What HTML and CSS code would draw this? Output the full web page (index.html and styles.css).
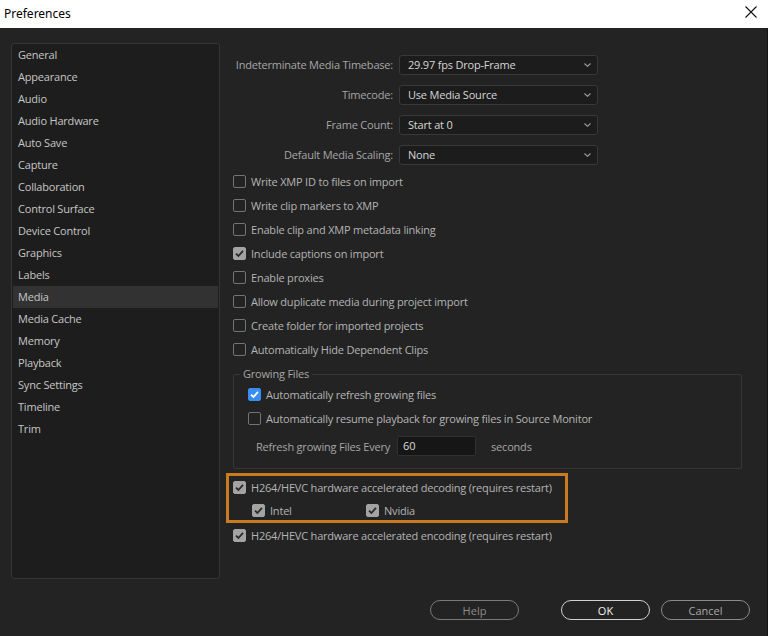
FILE: index.html
```html
<!DOCTYPE html>
<html>
<head>
  <meta charset="UTF-8" />
  <title>Preferences</title>
  <link rel="stylesheet" href="styles.css">
</head>
<body>

<!-- Window title bar -->
<div class="titlebar">
  <span class="title">Preferences</span>
  <svg class="close" width="12" height="12" viewBox="0 0 12 12">
    <path d="M0.5 0.5 L11.5 11.5 M11.5 0.5 L0.5 11.5" stroke="#111" stroke-width="1.1" fill="none"/>
  </svg>
</div>

<div class="dialog">
  <div class="main">

    <!-- Category list -->
    <ul class="sidebar">
      <li>General</li>
      <li>Appearance</li>
      <li>Audio</li>
      <li>Audio Hardware</li>
      <li>Auto Save</li>
      <li>Capture</li>
      <li>Collaboration</li>
      <li>Control Surface</li>
      <li>Device Control</li>
      <li>Graphics</li>
      <li>Labels</li>
      <li class="active">Media</li>
      <li>Media Cache</li>
      <li>Memory</li>
      <li>Playback</li>
      <li>Sync Settings</li>
      <li>Timeline</li>
      <li>Trim</li>
    </ul>

    <!-- Media settings -->
    <div class="pane">
      <div class="fields">
        <label>Indeterminate Media Timebase:</label>
        <div class="select">29.97 fps Drop-Frame <svg class="chev" width="7" height="4" viewBox="0 0 7 4"><path d="M0.5 0.5 L3.5 3.3 L6.5 0.5" stroke="#a0a0a0" stroke-width="1.1" fill="none"/></svg></div>
        <label>Timecode:</label>
        <div class="select">Use Media Source <svg class="chev" width="7" height="4" viewBox="0 0 7 4"><path d="M0.5 0.5 L3.5 3.3 L6.5 0.5" stroke="#a0a0a0" stroke-width="1.1" fill="none"/></svg></div>
        <label>Frame Count:</label>
        <div class="select">Start at 0 <svg class="chev" width="7" height="4" viewBox="0 0 7 4"><path d="M0.5 0.5 L3.5 3.3 L6.5 0.5" stroke="#a0a0a0" stroke-width="1.1" fill="none"/></svg></div>
        <label>Default Media Scaling:</label>
        <div class="select">None <svg class="chev" width="7" height="4" viewBox="0 0 7 4"><path d="M0.5 0.5 L3.5 3.3 L6.5 0.5" stroke="#a0a0a0" stroke-width="1.1" fill="none"/></svg></div>
      </div>

      <div class="checks">
        <div class="check"><span class="box"></span>Write XMP ID to files on import</div>
        <div class="check"><span class="box"></span>Write clip markers to XMP</div>
        <div class="check"><span class="box"></span>Enable clip and XMP metadata linking</div>
        <div class="check"><span class="box on"><svg width="11" height="11" viewBox="0 0 11 11"><path d="M2 5.6 L4.4 8 L9 2.8" stroke="#2b2b2b" stroke-width="1.8" fill="none"/></svg></span>Include captions on import</div>
        <div class="check"><span class="box"></span>Enable proxies</div>
        <div class="check"><span class="box"></span>Allow duplicate media during project import</div>
        <div class="check"><span class="box"></span>Create folder for imported projects</div>
        <div class="check"><span class="box"></span>Automatically Hide Dependent Clips</div>
      </div>

      <fieldset class="group">
        <legend>Growing Files</legend>
        <div class="check"><span class="box blue"><svg width="11" height="11" viewBox="0 0 11 11"><path d="M2 5.6 L4.4 8 L9 2.8" stroke="#fff" stroke-width="1.8" fill="none"/></svg></span>Automatically refresh growing files</div>
        <div class="check"><span class="box"></span>Automatically resume playback for growing files in Source Monitor</div>
        <div class="refresh">
          <span>Refresh growing Files Every</span>
          <div class="num">60</div>
          <span class="unit">seconds</span>
        </div>
      </fieldset>

      <div class="highlight">
        <div class="check"><span class="box on"><svg width="11" height="11" viewBox="0 0 11 11"><path d="M2 5.6 L4.4 8 L9 2.8" stroke="#2b2b2b" stroke-width="1.8" fill="none"/></svg></span>H264/HEVC hardware accelerated decoding (requires restart)</div>
        <div class="sub">
          <div class="check intel"><span class="box on"><svg width="11" height="11" viewBox="0 0 11 11"><path d="M2 5.6 L4.4 8 L9 2.8" stroke="#2b2b2b" stroke-width="1.8" fill="none"/></svg></span>Intel</div>
          <div class="check"><span class="box on"><svg width="11" height="11" viewBox="0 0 11 11"><path d="M2 5.6 L4.4 8 L9 2.8" stroke="#2b2b2b" stroke-width="1.8" fill="none"/></svg></span>Nvidia</div>
        </div>
      </div>

      <div class="check encode"><span class="box on"><svg width="11" height="11" viewBox="0 0 11 11"><path d="M2 5.6 L4.4 8 L9 2.8" stroke="#2b2b2b" stroke-width="1.8" fill="none"/></svg></span>H264/HEVC hardware accelerated encoding (requires restart)</div>
    </div>
  </div>

  <!-- Dialog buttons -->
  <div class="buttons">
    <button class="btn help">Help</button>
    <button class="btn ok">OK</button>
    <button class="btn">Cancel</button>
  </div>
</div>

</body>
</html>
```

FILE: styles.css
```css
/* Page reset */
body {
  margin: 0;
  width: 768px;
  height: 636px;
  overflow: hidden;
  background-color: #232323;
  font-family: "Open Sans", "Noto Sans", sans-serif;
  font-size: 11px;
  letter-spacing: -0.2px;
}

/* White window title bar */
.titlebar {
  height: 28px;
  background-color: #ffffff;
  display: flex;
  align-items: center;
  justify-content: space-between;
  padding: 0 11px 0 4px;
  letter-spacing: 0;
}

.title {
  font-family: "Noto Sans", sans-serif;
  font-size: 12px;
  color: #000;
  margin-top: -2px;
}

.close {
  margin-top: -4px;
}

/* Dark dialog body */
.dialog {
  height: 608px;
  display: flex;
  flex-direction: column;
  border-right: 1px solid #141414;
  box-sizing: border-box;
}

.main {
  display: flex;
  padding: 15px 0 0 11px;
}

/* Category list on the left */
.sidebar {
  list-style: none;
  margin: 0;
  padding: 0;
  width: 209px;
  height: 536px;
  box-sizing: border-box;
  background-color: #1d1d1d;
  border: 1px solid #353535;
  border-radius: 3px;
}

.sidebar li {
  height: 22px;
  line-height: 22px;
  padding-left: 5px;
  margin: 0 1px;
  color: #c6c6c6;
}

.sidebar li.active {
  background-color: #323232;
}

/* Right hand settings pane */
.pane {
  padding: 12px 0 0 6px;
  flex: 1;
}

.fields {
  display: grid;
  grid-template-columns: 167px 199px;
  column-gap: 6px;
  row-gap: 10px;
}

.fields label {
  text-align: right;
  line-height: 19px;
  color: #a6a6a6;
}

.select {
  height: 20px;
  box-sizing: border-box;
  border: 1px solid #383838;
  border-radius: 3px;
  background-color: #1c1c1c;
  color: #d6d6d6;
  padding: 0 6px 1px 8px;
  display: flex;
  align-items: center;
  justify-content: space-between;
}

.chev {
  margin-top: 1px;
}

/* Checkbox rows */
.checks {
  margin-top: 4px;
}

.check {
  height: 24px;
  display: flex;
  align-items: center;
  color: #b4b4b4;
  padding-left: 7px;
}

.box {
  width: 13px;
  height: 13px;
  box-sizing: border-box;
  border: 1px solid #737373;
  border-radius: 2px;
  margin-right: 5px;
  display: flex;
  align-items: center;
  justify-content: center;
  flex-shrink: 0;
}

.box.on {
  background-color: #a3a3a3;
  border-color: #a3a3a3;
}

.box.blue {
  background-color: #378ef0;
  border-color: #378ef0;
}

/* Growing Files group */
.group {
  margin: 5px 0 0 7px;
  width: 509px;
  box-sizing: border-box;
  border: 1px solid #363636;
  border-radius: 2px;
  padding: 0 0 9px 6px;
}

.group legend {
  padding: 0 3px;
  color: #a6a6a6;
  line-height: 16px;
}

.group .check {
  padding-left: 8px;
}

.refresh {
  height: 26px;
  margin-top: 3px;
  display: flex;
  align-items: center;
  padding-left: 16px;
  color: #a6a6a6;
}

.num {
  width: 79px;
  height: 20px;
  box-sizing: border-box;
  margin-left: 7px;
  padding-left: 5px;
  line-height: 18px;
  background-color: #161616;
  border: 1px solid #303030;
  border-radius: 2px;
  color: #dcdcdc;
}

.unit {
  margin-left: 15px;
}

/* Orange callout around the decoding options */
.highlight {
  margin-top: 4px;
  width: 342px;
  height: 50px;
  box-sizing: border-box;
  border: 3px solid #c97c1f;
}

.highlight .check {
  height: 22px;
  padding-left: 4px;
}

.sub {
  display: flex;
  margin-top: 3px;
}

.highlight .sub .check {
  height: 19px;
  padding-left: 23px;
}

.highlight .sub .intel {
  width: 91px;
}

/* Bottom buttons */
.buttons {
  display: flex;
  justify-content: flex-end;
  margin-top: 21px;
  padding-right: 17px;
  gap: 11px;
}

.btn {
  width: 89px;
  height: 20px;
  box-sizing: border-box;
  border: 1px solid #8a8a8a;
  border-radius: 10px;
  background: transparent;
  font-family: "Open Sans", "Noto Sans", sans-serif;
  font-size: 11px;
  color: #a8a8a8;
  padding: 0;
}

.btn.help {
  margin-right: 31px;
  border-color: #7a7a7a;
  color: #8c8c8c;
}

.btn.ok {
  border-color: #d0d0d0;
  color: #f0f0f0;
}
```
